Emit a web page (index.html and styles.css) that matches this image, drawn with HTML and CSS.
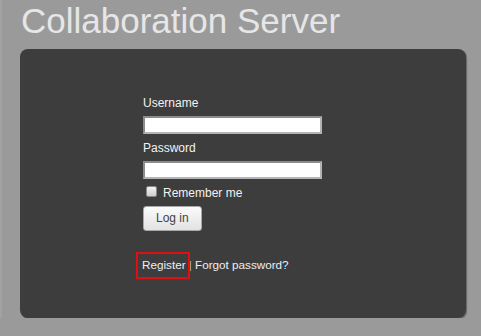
FILE: index.html
```html
<!DOCTYPE html>
<html>
<head>
	<title>Collaboration Server</title>
	<link rel="stylesheet" href="styles.css">
</head>

<body>
	<h1 class="title">Collaboration Server</h1>

	<div class="panel">
		<form class="login">
			<label class="label" for="user">Username</label>
			<input class="field" type="text" id="user">

			<label class="label" for="pass">Password</label>
			<input class="field" type="password" id="pass">

			<label class="remember">
				<input class="check" type="checkbox">
				<span>Remember me</span>
			</label>

			<div>
				<button class="loginBtn" type="button">Log in</button>
			</div>

			<div class="links">
				<a class="link register" href="#">Register</a>
				<span class="sep">|</span>
				<a class="link" href="#">Forgot password?</a>
			</div>
		</form>
	</div>
</body>
</html>
```

FILE: styles.css
```css
html {
	background: #9a9a9a;
	border-left: 2px solid #a2a2a2;
}

body {
	margin: 0;
	padding: 0 15px 0 18px;
	font-family: "Liberation Sans", Arial, sans-serif;
}

.title {
	margin: 1px 0 8px 1px;
	font-size: 35px;
	line-height: 40px;
	font-weight: normal;
	color: #e6e6e6;
}

.panel {
	background: #3d3d3d;
	border-radius: 8px;
	box-shadow: 1px 1px 1px rgba(0, 0, 0, 0.35);
	padding: 47px 0 46px 123px;
}

.login {
	display: flex;
	flex-direction: column;
	align-items: flex-start;
}

.label {
	font-size: 12px;
	line-height: 14px;
	color: #f2f2f2;
}

.field {
	box-sizing: border-box;
	width: 179px;
	height: 18px;
	margin: 6px 0 7px 0;
	padding: 0 3px;
	background: #fff;
	border: 2px solid;
	border-color: #8c8c8c #b4b4b4 #b4b4b4 #8c8c8c;
}

.remember {
	display: flex;
	align-items: flex-start;
	margin-top: 0;
	font-size: 12px;
	line-height: 14px;
	color: #f2f2f2;
}

.check {
	appearance: none;
	box-sizing: border-box;
	width: 11px;
	height: 11px;
	margin: 0 6px 0 3px;
	background: linear-gradient(#f2f2f2, #cfcfcf);
	border: 1px solid #8a8a8a;
	border-radius: 2px;
}

.loginBtn {
	margin-top: 6px;
	padding: 4px 12px 5px 12px;
	font-family: "Liberation Sans", Arial, sans-serif;
	font-size: 12px;
	line-height: 14px;
	color: #444;
	background: linear-gradient(#fbfbfb, #e2e2e2);
	border: 1px solid #a9a9a9;
	border-radius: 3px;
}

.links {
	margin: 27px 0 0 -1px;
	font-size: 11.7px;
	line-height: 14px;
	color: #eee;
}

.link {
	color: #eee;
	text-decoration: none;
}

.sep {
	color: #bbb;
}

/* red marker round the register link */
.register {
	position: relative;
}

.register::after {
	content: "";
	position: absolute;
	left: -6px;
	top: -6px;
	width: 54px;
	height: 27px;
	box-sizing: border-box;
	border: 2px solid #e01010;
	box-shadow: 0 1px 0 #1e5153;
}
```
